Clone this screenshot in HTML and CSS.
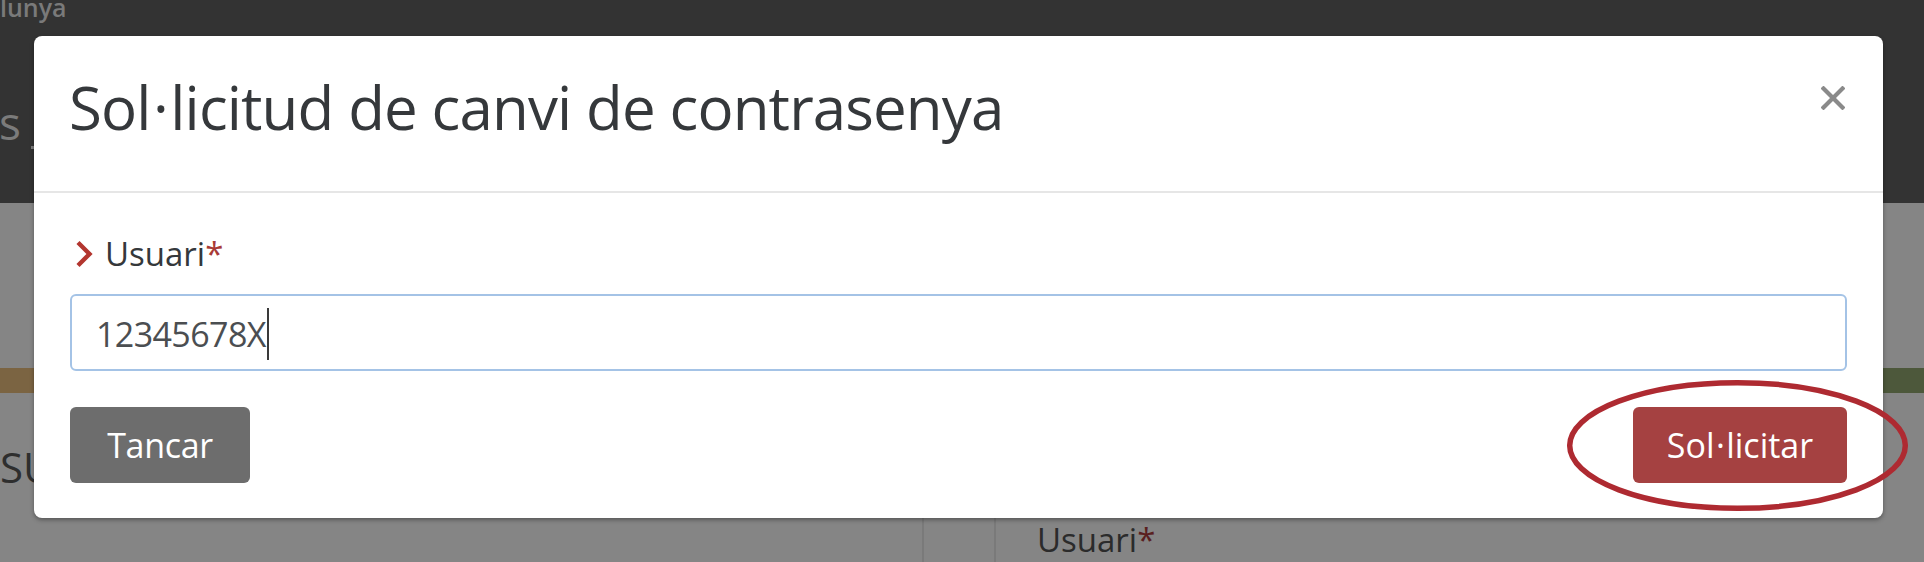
FILE: index.html
```html
<!DOCTYPE html>
<html>
<head>
<meta charset="utf-8">
<title>Sol·licitud de canvi de contrasenya</title>
<link rel="stylesheet" href="styles.css">
</head>
<body>
<div class="page">
  <header class="top">
    <div class="brand">lunya</div>
    <div class="site-title">s<span class="dot"></span></div>
  </header>
  <main class="content">
    <div class="stripe"><span class="stripe-a"></span><span class="stripe-b"></span></div>
    <div class="section-title">SU</div>
    <div class="cols">
      <div class="col col-1"></div>
      <div class="col col-2"></div>
      <div class="col col-3"><span class="bg-label">Usuari<span class="bg-req">*</span></span></div>
    </div>
  </main>
</div>

<div class="modal" role="dialog" aria-labelledby="modal-title">
  <div class="modal-header">
    <h4 class="modal-title" id="modal-title">Sol<span class="pv">·</span>licitud de canvi de contrasenya</h4>
    <button class="close" type="button" aria-label="Tancar">
      <svg width="24" height="24" viewBox="0 0 24 24"><path d="M2.5 2.5 L21.5 21.5 M21.5 2.5 L2.5 21.5" stroke="#8a8a8a" stroke-width="4.2" stroke-linecap="square" fill="none"/></svg>
    </button>
  </div>
  <div class="modal-body">
    <label class="field-label">
      <svg class="chev" width="18" height="28" viewBox="0 0 18 28"><path d="M3 2.5 L14.5 14 L3 25.5" stroke="#b3362f" stroke-width="4.4" fill="none"/></svg>
      <span>Usuari</span><span class="req">*</span>
    </label>
    <div class="field" role="textbox">12345678X<span class="caret"></span></div>
  </div>
  <div class="modal-footer">
    <button class="btn btn-grey" type="button">Tancar</button>
    <button class="btn btn-red" type="button">Sol<span class="pv">·</span>licitar</button>
  </div>
</div>

<svg class="highlight" width="350" height="140" viewBox="0 0 350 140">
  <ellipse cx="172.5" cy="67.5" rx="167.8" ry="62.8" fill="none" stroke="#ae2a31" stroke-width="5.5"/>
</svg>
</body>
</html>
```

FILE: styles.css
```css
html, body {
  margin: 0;
  padding: 0;
}
body {
  width: 1924px;
  height: 562px;
  overflow: hidden;
  font-family: "Open Sans", "Noto Sans", "Liberation Sans", sans-serif;
  font-feature-settings: "locl" 0, "liga" 0;
  background: #858585;
  position: relative;
}

/* background page (dimmed) */
.page {
  display: flex;
  flex-direction: column;
  height: 562px;
  overflow: hidden;
}
.top {
  flex: 0 0 203px;
  height: 203px;
  background: #333333;
  overflow: hidden;
}
.brand {
  font-size: 25px;
  font-weight: 600;
  color: #7a7a7a;
  line-height: 22px;
  margin-top: -4px;
}
.site-title {
  margin-top: 78px;
  font-size: 46px;
  line-height: 52px;
  color: #7b7b7b;
  margin-left: -1px;
}
.dot {
  display: inline-block;
  width: 5px;
  height: 3px;
  background: #7b7b7b;
  margin-left: 10px;
  vertical-align: -9px;
}
.content {
  flex: 1 1 auto;
  min-height: 0;
  background: #858585;
}
.stripe {
  margin-top: 165px;
  height: 25px;
  display: flex;
}
.stripe-a { flex: 1; background: #7b6442; }
.stripe-b { flex: 1; background: #4d583b; }
.section-title {
  margin-top: 50px;
  font-size: 42px;
  line-height: 48px;
  color: #2e2e2e;
  font-weight: 500;
}
.cols {
  margin-top: 26px;
  display: flex;
  height: 60px;
}
.col-1 { width: 922px; border-right: 2px solid #7a7a7a; }
.col-2 { width: 70px; border-right: 2px solid #7a7a7a; }
.col-3 { padding-left: 41px; padding-top: 1px; }
.bg-label {
  font-size: 33px;
  line-height: 44px;
  font-weight: 500;
  color: #2b2b2b;
}
.bg-req { color: #5a1f1f; }

/* modal */
.modal {
  position: absolute;
  left: 34px;
  top: 36px;
  width: 1849px;
  background: #ffffff;
  border-radius: 8px;
  box-shadow: 0 2px 4px rgba(0,0,0,0.35);
  display: flex;
  flex-direction: column;
}
.modal-header {
  display: flex;
  justify-content: space-between;
  align-items: flex-start;
  padding: 36px 38px 49px 35px;
  border-bottom: 2px solid #e6e6e6;
}
.modal-title {
  margin: 0;
  font-size: 60px;
  line-height: 70px;
  font-weight: 400;
  color: #35383b;
  letter-spacing: -0.85px;
}
.pv {
  margin: 0 0.04em;
}
.close {
  margin-top: 14px;
  padding: 0;
  border: 0;
  background: none;
  width: 24px;
  height: 24px;
  display: block;
}
.close svg { display: block; }
.modal-body {
  padding: 38px 36px 0 36px;
  display: flex;
  flex-direction: column;
  gap: 19px;
}
.field-label {
  display: flex;
  align-items: center;
  height: 44px;
  padding-left: 5px;
  font-size: 33px;
  font-weight: 500;
  color: #35383b;
}
.chev {
  display: block;
  margin-right: 12px;
  margin-top: 2px;
}
.req { color: #a83a36; }
.field {
  height: 77px;
  box-sizing: border-box;
  border: 2px solid #a4c3e6;
  border-radius: 6px;
  padding: 2px 20px 0 24px;
  display: flex;
  align-items: center;
  font-size: 34px;
  color: #4b4e51;
  letter-spacing: -0.6px;
}
.caret {
  display: inline-block;
  width: 2px;
  height: 52px;
  background: #3a3a3a;
  margin-left: 1px;
}
.modal-footer {
  display: flex;
  justify-content: space-between;
  padding: 36px 36px 35px 36px;
}
.btn {
  height: 76px;
  border: 0;
  border-radius: 6px;
  color: #ffffff;
  font-family: inherit;
  font-size: 34px;
  line-height: 76px;
  padding: 0;
}
.btn-grey { background: #6d6d6d; width: 180px; letter-spacing: -0.3px; }
.btn-red { background: #a54141; width: 214px; }

/* annotation ellipse drawn over the screenshot */
.highlight {
  position: absolute;
  left: 1565px;
  top: 378px;
}
```
